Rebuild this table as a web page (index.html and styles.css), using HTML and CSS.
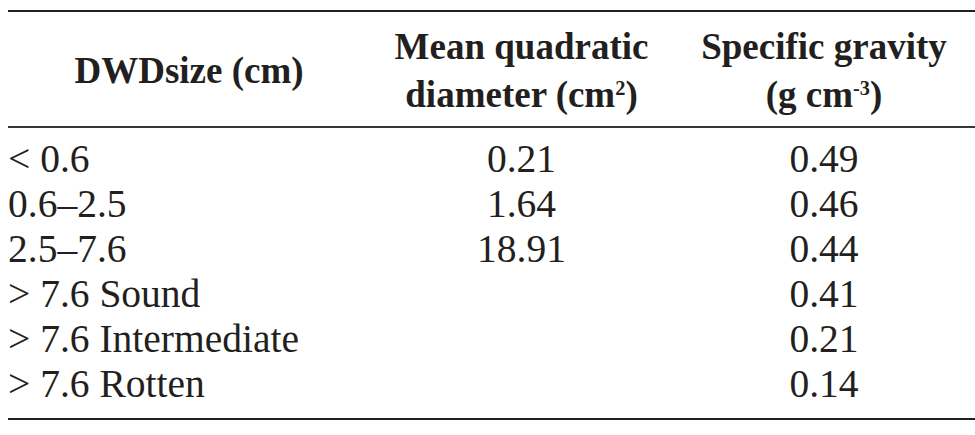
FILE: index.html
```html
<!DOCTYPE html>
<html>
<head>
<meta charset="utf-8">
<link rel="stylesheet" href="styles.css">
</head>
<body>
<table class="data">
  <colgroup>
    <col class="c1">
    <col class="c2">
    <col class="c3">
  </colgroup>
  <thead>
    <tr>
      <th class="h-left">DWDsize (cm)</th>
      <th>Mean quadratic<br>diameter (cm<sup>2</sup>)</th>
      <th>Specific gravity<br>(g cm<sup>-3</sup>)</th>
    </tr>
  </thead>
  <tbody>
    <tr class="first"><td class="label">&lt; 0.6</td><td>0.21</td><td>0.49</td></tr>
    <tr><td class="label">0.6–2.5</td><td>1.64</td><td>0.46</td></tr>
    <tr><td class="label">2.5–7.6</td><td>18.91</td><td>0.44</td></tr>
    <tr><td class="label">&gt; 7.6 Sound</td><td></td><td>0.41</td></tr>
    <tr><td class="label">&gt; 7.6 Intermediate</td><td></td><td>0.21</td></tr>
    <tr class="last"><td class="label">&gt; 7.6 Rotten</td><td></td><td>0.14</td></tr>
  </tbody>
</table>
</body>
</html>
```
FILE: styles.css
```css
html, body {
  margin: 0;
  padding: 0;
  background: #ffffff;
}
body {
  font-family: "Liberation Serif", "Times New Roman", serif;
  color: #231f20;
}
.data {
  margin: 10px 0 0 8px;
  width: 967px;
  border-collapse: collapse;
  table-layout: fixed;
  border-top: 2px solid #231f20;
  border-bottom: 2px solid #231f20;
}
.c1 { width: 362px; }
.c2 { width: 303px; }
.c3 { width: 302px; }
.data th {
  font-weight: bold;
  font-size: 37px;
  line-height: 48px;
  text-align: center;
  padding: 11px 0 7px 0;
  border-bottom: 2px solid #3a3637;
  vertical-align: middle;
}
.data th sup {
  font-size: 0.55em;
  line-height: 0;
  vertical-align: 0.6em;
}
.data td {
  font-size: 39.5px;
  line-height: 45px;
  padding: 0;
  text-align: center;
}
.data td.label {
  text-align: left;
}
.data tr.first td { padding-top: 9px; }
.data tr.last td { padding-bottom: 11px; }
```
